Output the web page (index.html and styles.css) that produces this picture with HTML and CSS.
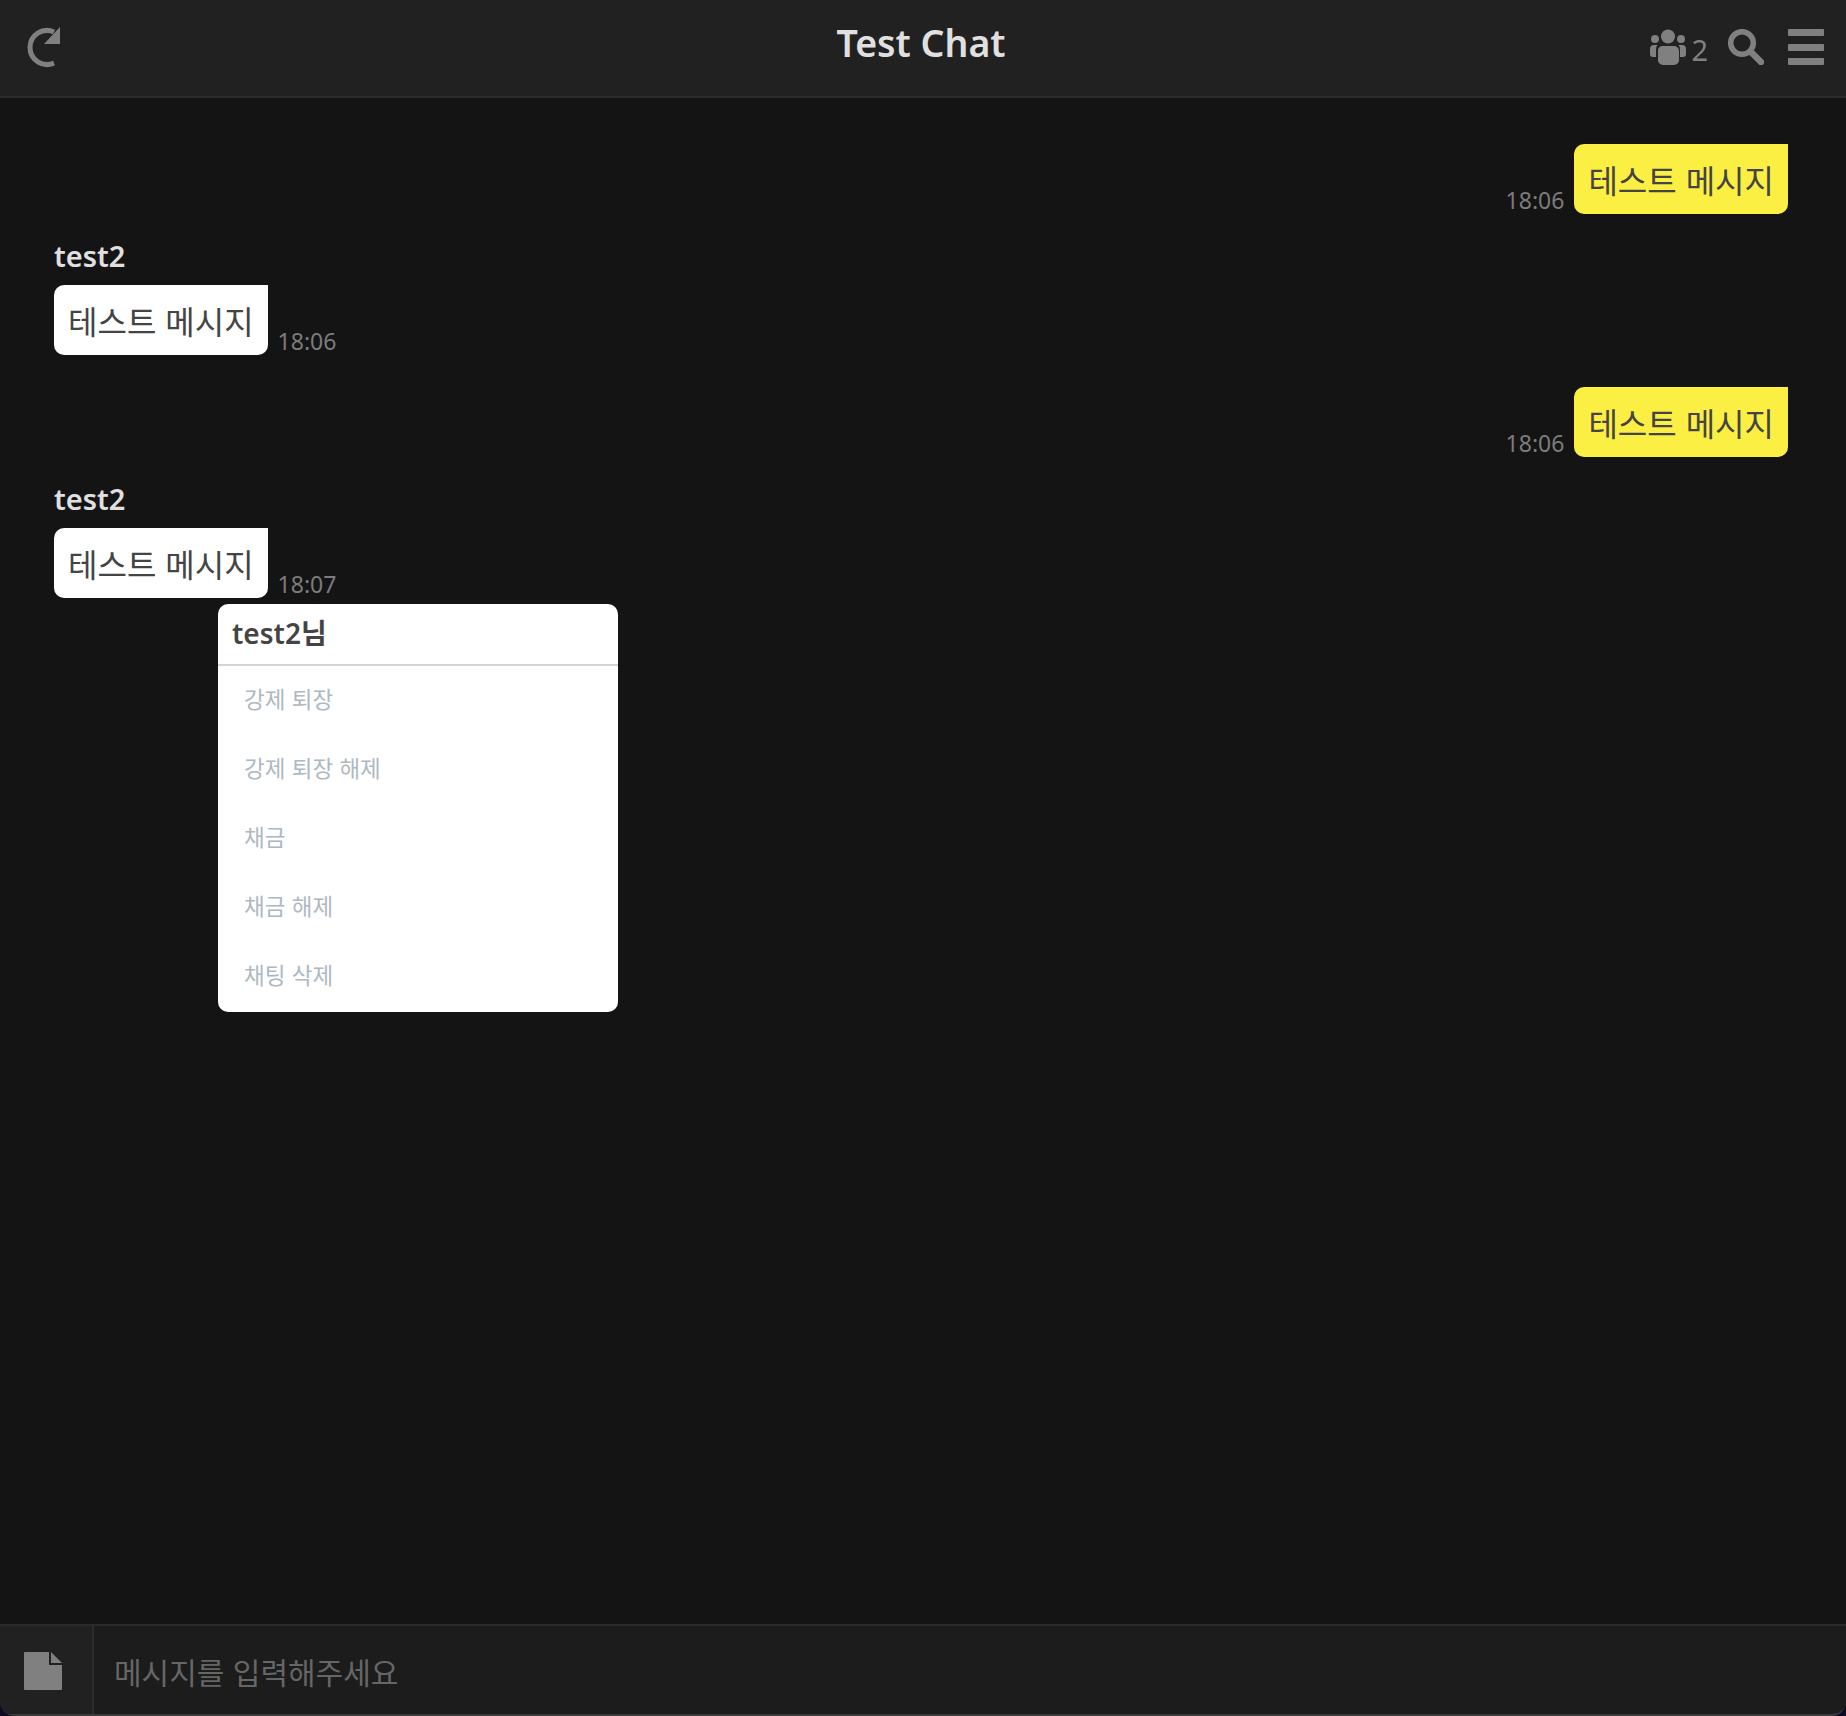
FILE: index.html
```html
<!DOCTYPE html>
<html lang="ko">
<head>
<meta charset="utf-8">
<title>Test Chat</title>
<link rel="stylesheet" href="styles.css">
</head>
<body>
<div class="app">
  <header class="topbar">
    <button class="icon-btn refresh" aria-label="새로고침">
      <svg viewBox="0 0 36 42" width="36" height="42"><path d="M28 37A17 17 0 1 1 28 6" fill="none" stroke="#808080" stroke-width="5"/><path d="M34 1v17H18z" fill="#808080"/></svg>
    </button>
    <h1 class="title">Test Chat</h1>
    <div class="actions">
      <span class="users">
        <svg viewBox="0 0 36 36" width="36" height="36"><circle cx="18" cy="7.500" r="7" fill="#808080"/><circle cx="5" cy="10" r="4" fill="#808080"/><circle cx="31" cy="10" r="4" fill="#808080"/><path d="M12 17h12a5 5 0 0 1 5 5v9a5 5 0 0 1-5 5H13a5 5 0 0 1-5-5v-9a5 5 0 0 1 4-5z" fill="#808080"/><path d="M7.500 16H4a4 4 0 0 0-4 4v5a3 3 0 0 0 3 3h3v-7a6 6 0 0 1 1.500-5zM28.500 16H32a4 4 0 0 1 4 4v5a3 3 0 0 1-3 3h-3v-7a6 6 0 0 0-1.500-5z" fill="#808080"/></svg>
        <span class="count">2</span>
      </span>
      <svg class="search" viewBox="0 0 36 36" width="36" height="36"><circle cx="14" cy="14" r="11.300" fill="none" stroke="#808080" stroke-width="5.500"/><path d="M23 23l10 10" stroke="#808080" stroke-width="6.500" stroke-linecap="round"/></svg>
      <div class="menu"><i></i><i></i><i></i></div>
    </div>
  </header>

  <main class="messages">
    <div class="row mine"><span class="time">18:06</span><div class="bubble">테스트 메시지</div></div>
    <div class="theirs">
      <div class="name">test2</div>
      <div class="row"><div class="bubble">테스트 메시지</div><span class="time">18:06</span></div>
    </div>
    <div class="row mine"><span class="time">18:06</span><div class="bubble">테스트 메시지</div></div>
    <div class="theirs anchor">
      <div class="name">test2</div>
      <div class="row"><div class="bubble">테스트 메시지</div><span class="time">18:07</span></div>
      <div class="popup">
        <div class="popup-head">test2님</div>
        <ul class="popup-list">
          <li>강제 퇴장</li>
          <li>강제 퇴장 해제</li>
          <li>채금</li>
          <li>채금 해제</li>
          <li>채팅 삭제</li>
        </ul>
      </div>
    </div>
  </main>

  <footer class="composer">
    <div class="attach">
      <svg viewBox="0 0 38 38" width="38" height="38"><path d="M1 0h24v13h13v24a1 1 0 0 1-1 1H1a1 1 0 0 1-1-1V1a1 1 0 0 1 1-1z" fill="#808080"/><path d="M27 0l11 11H27z" fill="#808080"/></svg>
    </div>
    <div class="input">메시지를 입력해주세요</div>
  </footer>
</div>
</body>
</html>
```
FILE: styles.css
```css
* { box-sizing: border-box; }
html, body { height: 100%; }
body {
  margin: 0;
  background: #0d0a24;
  font-family: "Noto Sans", "Noto Sans CJK KR", sans-serif;
}
.app {
  height: 1716px;
  display: flex;
  flex-direction: column;
  background: #141414;
  border-radius: 0 0 14px 14px;
  overflow: hidden;
}
.topbar {
  height: 98px;
  flex: none;
  display: flex;
  align-items: center;
  justify-content: space-between;
  padding: 0 22px 0 26px;
  background: #212121;
  border-bottom: 2px solid #2c2c2c;
  position: relative;
}
.icon-btn { background: none; border: 0; padding: 0; display: flex; }
.refresh { margin-bottom: 2px; }
.title {
  position: absolute;
  left: 0;
  right: 4px;
  top: 15px;
  margin: 0;
  text-align: center;
  font-size: 37.500px;
  line-height: 56px;
  font-weight: 600;
  color: #e0e0e0;
  pointer-events: none;
}
.actions { display: flex; align-items: center; margin-bottom: 2px; }
.users { display: flex; align-items: flex-end; margin-right: 20px; }
.count { font-size: 29px; line-height: 36px; color: #808080; margin-left: 5px; position: relative; top: 3px; }
.search { margin-right: 24px; }
.menu { width: 36px; height: 36px; display: flex; flex-direction: column; justify-content: space-between; }
.menu i { display: block; height: 7px; background: #808080; border-radius: 1px; }
.messages {
  flex: 1;
  padding: 46px 58px 0 54px;
  display: flex;
  flex-direction: column;
}
.row { display: flex; align-items: flex-end; gap: 10px; }
.mine { justify-content: flex-end; margin-bottom: 32px; }
.theirs { margin-bottom: 32px; }
.name {
  font-size: 29px;
  line-height: 20px;
  padding-bottom: 19px;
  font-weight: 600;
  color: #e0e0e0;
}
.bubble {
  height: 70px;
  padding: 0 14px;
  display: flex;
  align-items: center;
  font-family: "Noto Sans CJK KR", sans-serif;
  font-size: 32px;
  color: #444;
  background: #fff;
  border-radius: 10px 0 10px 10px;
}
.mine .bubble { background: #fcef43; }
.time { font-size: 23px; line-height: 28px; color: #7c7c7c; }
.anchor { position: relative; }
.popup {
  position: absolute;
  left: 164px;
  top: 115px;
  width: 400px;
  height: 408px;
  background: #fff;
  border-radius: 10px;
}
.popup-head {
  height: 62px;
  padding: 0 14px 4px;
  display: flex;
  align-items: center;
  font-size: 28px;
  font-weight: 600;
  color: #444;
  border-bottom: 2px solid #d4d4d4;
}
.popup-list { margin: 0; padding: 0; list-style: none; }
.popup-list li {
  height: 69px;
  padding: 0 26px 6px;
  display: flex;
  align-items: center;
  font-family: "Noto Sans CJK KR", sans-serif;
  font-size: 22.500px;
  color: #adb8c1;
}
.composer {
  height: 92px;
  flex: none;
  display: flex;
  background: #1c1c1c;
  border-top: 2px solid #2a2a2a;
  border-bottom: 2px solid #3a3a3a;
  border-radius: 0 0 14px 14px;
}
.attach {
  width: 94px;
  flex: none;
  display: flex;
  align-items: center;
  justify-content: center;
  border-right: 2px solid #2c2c2c;
  background: #212121;
  padding: 2px 6px 0 0;
}
.input {
  padding: 2px 0 0 20px;
  display: flex;
  align-items: center;
  font-family: "Noto Sans CJK KR", sans-serif;
  font-size: 30px;
  color: #666;
}
```
